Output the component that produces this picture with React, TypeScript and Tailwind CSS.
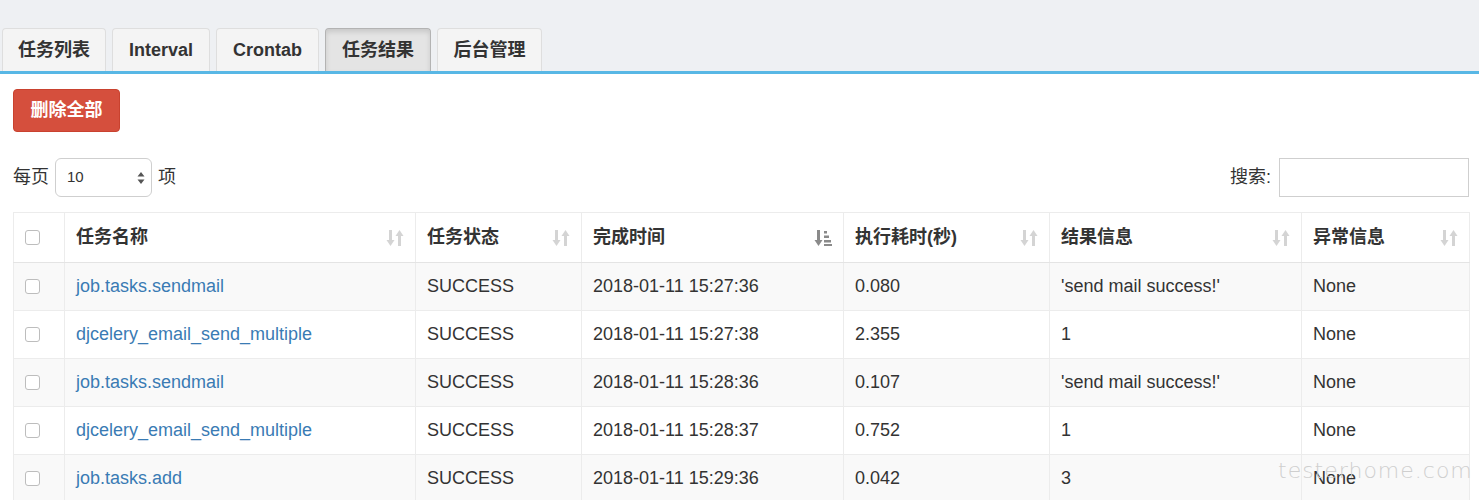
import React from "react";

const tabs = [
  { label: "任务列表", w: "w-[104px]" },
  { label: "Interval", w: "w-[98px]" },
  { label: "Crontab", w: "w-[103px]" },
  { label: "任务结果", w: "w-[106px]", active: true },
  { label: "后台管理", w: "w-[105px]" },
];

const columns = [
  { title: "任务名称", w: "w-[351px]" },
  { title: "任务状态", w: "w-[166px]" },
  { title: "完成时间", w: "w-[262px]", sorted: true },
  { title: "执行耗时(秒)", w: "w-[206px]" },
  { title: "结果信息", w: "w-[252px]" },
  { title: "异常信息", w: "w-[168px]" },
];

const rows = [
  ["job.tasks.sendmail", "SUCCESS", "2018-01-11 15:27:36", "0.080", "'send mail success!'", "None"],
  ["djcelery_email_send_multiple", "SUCCESS", "2018-01-11 15:27:38", "2.355", "1", "None"],
  ["job.tasks.sendmail", "SUCCESS", "2018-01-11 15:28:36", "0.107", "'send mail success!'", "None"],
  ["djcelery_email_send_multiple", "SUCCESS", "2018-01-11 15:28:37", "0.752", "1", "None"],
  ["job.tasks.add", "SUCCESS", "2018-01-11 15:29:36", "0.042", "3", "None"],
];

function SortIcon() {
  return (
    <svg width="18" height="20" viewBox="0 0 18 20" className="shrink-0">
      <g fill="#d4d4d4">
        <rect x="3" y="2" width="3" height="12" />
        <path d="M0.5 12 L8.5 12 L4.5 18 Z" />
        <rect x="12" y="6" width="3" height="12" />
        <path d="M9.5 8 L17.5 8 L13.5 2 Z" />
      </g>
    </svg>
  );
}

function SortedIcon() {
  return (
    <svg width="18" height="20" viewBox="0 0 18 20" className="shrink-0">
      <g fill="#8a8a8a">
        <rect x="3" y="2" width="3" height="12" />
        <path d="M0.5 12 L8.5 12 L4.5 18 Z" />
        <rect x="10" y="3" width="3" height="2.5" />
        <rect x="10" y="7.5" width="5" height="2.5" />
        <rect x="10" y="12" width="7" height="2.5" />
        <rect x="10" y="16" width="8" height="2" />
      </g>
    </svg>
  );
}

function Checkbox() {
  return <div className="w-[15px] h-[15px] rounded-[3px] border border-[#bdbdbd] bg-white" />;
}

export default function App() {
  return (
    <div
      className="relative w-[1479px] h-[500px] overflow-hidden bg-white text-[#333]"
      style={{ fontFamily: '"Liberation Sans", "Noto Sans CJK SC", sans-serif' }}
    >
      {/* Tabs */}
      <div className="h-[71px] bg-[#eef0f3] flex items-end gap-[6px] pl-[2px]">
        {tabs.map((t) => (
          <div
            key={t.label}
            className={
              "h-[43px] flex items-center justify-center rounded-t-[4px] border border-b-0 text-[18px] font-bold " +
              t.w +
              (t.active
                ? " bg-[#e4e4e4] border-[#b3b3b3] shadow-[inset_0_3px_5px_rgba(0,0,0,0.12)] text-[#333]"
                : " bg-[#f4f4f4] border-[#dedede] text-[#333]")
            }
          >
            {t.label}
          </div>
        ))}
      </div>
      <div className="h-[3px] bg-[#58b7e5]" />

      <div className="pl-[13px] pr-[10px]">
        <button className="mt-[15px] w-[107px] h-[43px] rounded-[4px] bg-[#d54f3d] border border-[#c9422f] text-white text-[18px] font-bold">
          删除全部
        </button>

        {/* Length + search */}
        <div className="mt-[26px] h-[39px] flex items-center justify-between">
          <div className="flex items-center gap-[6px] text-[18px]">
            <span>每页</span>
            <div className="w-[97px] h-[39px] rounded-[6px] border border-[#cfcfcf] flex items-center justify-between pl-[11px] pr-[6px] text-[15px]">
              <span>10</span>
              <svg width="8" height="14" viewBox="0 0 8 14">
                <path d="M4 1 L7.5 5.5 L0.5 5.5 Z M4 13 L7.5 8.5 L0.5 8.5 Z" fill="#555" />
              </svg>
            </div>
            <span>项</span>
          </div>
          <div className="flex items-center gap-[8px] text-[18px]">
            <span>搜索:</span>
            <div className="w-[190px] h-[39px] border border-[#cfcfcf]" />
          </div>
        </div>

        {/* Table */}
        <table className="mt-[15px] w-[1456px] table-fixed border-collapse text-[18px]">
          <thead>
            <tr className="h-[50px] bg-white">
              <th className="w-[51px] border border-[#ececec] border-b-[#e4e4e4] pl-[11px]">
                <Checkbox />
              </th>
              {columns.map((c) => (
                <th key={c.title} className={"border border-[#ececec] border-b-[#e4e4e4] text-left font-bold px-[11px] " + c.w}>
                  <div className="flex items-center justify-between">
                    <span>{c.title}</span>
                    {c.sorted ? <SortedIcon /> : <SortIcon />}
                  </div>
                </th>
              ))}
            </tr>
          </thead>
          <tbody>
            {rows.map((r, i) => (
              <tr key={i} className={"h-[48px] " + (i % 2 === 0 ? "bg-[#f9f9f9]" : "bg-white")}>
                <td className="border border-[#ececec] pl-[11px]">
                  <Checkbox />
                </td>
                {r.map((cell, j) => (
                  <td
                    key={j}
                    className={"border border-[#ececec] px-[11px] whitespace-nowrap " + (j === 0 ? "text-[#3a7bb4]" : "")}
                  >
                    {cell}
                  </td>
                ))}
              </tr>
            ))}
          </tbody>
        </table>
      </div>

      {/* watermark */}
      <div
        className="absolute left-[1278px] top-[454px] text-[22px] tracking-[1px] text-[#cfcfcf] font-extralight pointer-events-none"
        style={{ fontFamily: '"DejaVu Sans", sans-serif' }}
      >
        testerhome.com
      </div>
    </div>
  );
}
